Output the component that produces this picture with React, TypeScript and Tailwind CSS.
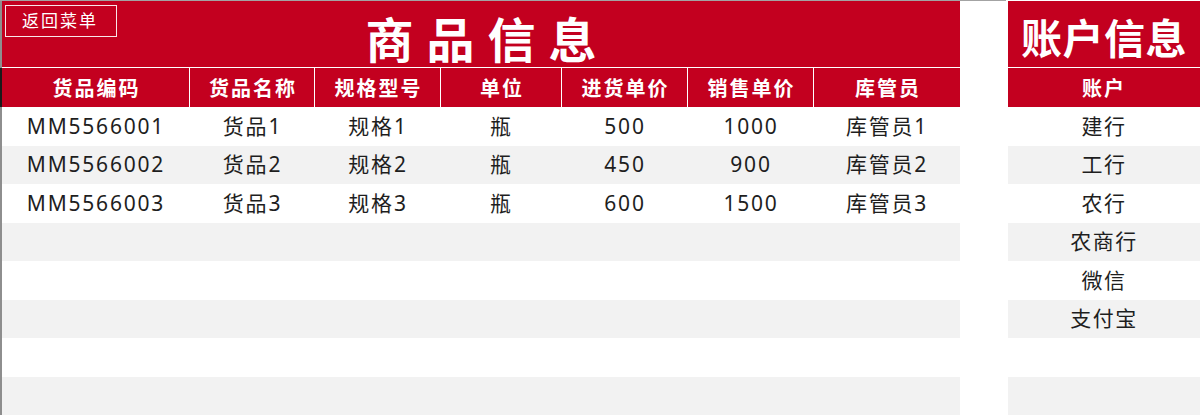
import React from "react";

const RED = "bg-[#c3001f]";
const widths = ["w-[188px]", "w-[125px]", "w-[126px]", "w-[121px]", "w-[126px]", "w-[126px]", "w-[146px]"];
const headers = ["货品编码", "货品名称", "规格型号", "单位", "进货单价", "销售单价", "库管员"];
const rows: string[][] = [
  ["MM5566001", "货品1", "规格1", "瓶", "500", "1000", "库管员1"],
  ["MM5566002", "货品2", "规格2", "瓶", "450", "900", "库管员2"],
  ["MM5566003", "货品3", "规格3", "瓶", "600", "1500", "库管员3"],
  ["", "", "", "", "", "", ""],
  ["", "", "", "", "", "", ""],
  ["", "", "", "", "", "", ""],
  ["", "", "", "", "", "", ""],
  ["", "", "", "", "", "", ""],
];
const accounts = ["建行", "工行", "农行", "农商行", "微信", "支付宝", "", ""];

const FONT = "font-['Noto_Sans','Noto_Sans_CJK_SC',sans-serif]";

export default function App() {
  return (
    <div className={`w-[1200px] h-[416px] overflow-hidden bg-white flex ${FONT}`}>
      {/* Left block */}
      <div className="w-[1006px] shrink-0 border-t border-[#a3a3a3] flex flex-col">
        {/* title */}
        <div className={`relative w-[960px] h-[66px] border-l-2 border-[#8e8e8e] ${RED} flex items-center justify-center pt-[6px]`}>
          <div className="absolute left-[3px] top-[4px] w-[112px] h-[32px] border border-white/90 text-white text-[17px] leading-none tracking-[2px] pl-[16px] pt-[5px] font-['Noto_Sans_CJK_SC',sans-serif]">
            返回菜单
          </div>
          <span className="text-white font-bold text-[48px] leading-none tracking-[13px] pl-[13px] font-['Noto_Sans_CJK_SC',sans-serif]">
            商品信息
          </span>
        </div>
        <div className="h-[1px] w-[960px] border-l-2 border-[#8e8e8e]" />
        {/* header */}
        <div className="flex w-[960px] h-[39px] border-l-2 border-[#1a1a1a]">
          {headers.map((h, i) => (
            <div
              key={i}
              className={`${widths[i]} ${RED} ${i < 6 ? "border-r border-white" : ""} flex items-center justify-center text-white font-bold text-[20px] tracking-[2px] pl-[2px] font-['Noto_Sans_CJK_SC',sans-serif]`}
            >
              {h}
            </div>
          ))}
        </div>
        {/* data */}
        {rows.map((r, ri) => (
          <div
            key={ri}
            className={`flex w-[960px] h-[38.5px] shrink-0 border-l-2 border-[#8e8e8e] ${ri % 2 === 1 ? "bg-[#f2f2f2]" : "bg-white"}`}
          >
            {r.map((c, ci) => (
              <div
                key={ci}
                className={`${widths[ci]} flex items-center justify-center text-[#1e1e1e] text-[21px] tracking-[1.8px] leading-none`}
              >
                {c}
              </div>
            ))}
          </div>
        ))}
      </div>
      {/* Right block */}
      <div className="ml-[2px] w-[192px] pt-[1px] flex flex-col">
        <div className={`h-[66px] ${RED} flex items-center justify-center pt-[4px]`}>
          <span className="text-white font-bold text-[41px] leading-none tracking-[0.5px] font-['Noto_Sans_CJK_SC',sans-serif]">
            账户信息
          </span>
        </div>
        <div className="h-[1px]" />
        <div className={`h-[39px] ${RED} flex items-center justify-center text-white font-bold text-[20px] tracking-[2px] font-['Noto_Sans_CJK_SC',sans-serif]`}>
          账户
        </div>
        {accounts.map((a, i) => (
          <div
            key={i}
            className={`h-[38.5px] shrink-0 flex items-center justify-center text-[#1e1e1e] text-[21px] tracking-[1.5px] leading-none ${i % 2 === 1 ? "bg-[#f2f2f2]" : "bg-white"}`}
          >
            {a}
          </div>
        ))}
      </div>
    </div>
  );
}
